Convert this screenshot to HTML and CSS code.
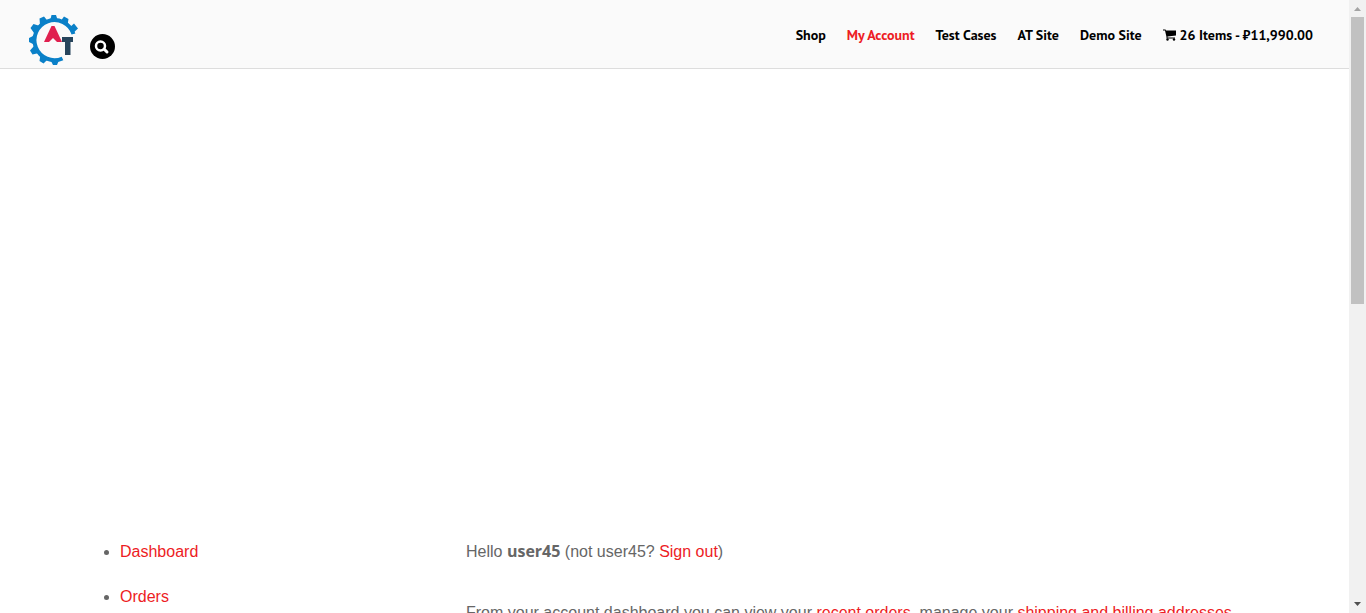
FILE: index.html
```html
<!DOCTYPE html>
<html lang="en">
<head>
<meta charset="utf-8">
<title>My Account</title>
<link rel="stylesheet" href="styles.css">
</head>
<body>
<div class="page">
  <header class="header">
    <div class="brand">
      <a class="logo" href="#" aria-label="AT Site home">
        <svg width="50" height="52" viewBox="0 0 50 52">
          <path d="M44.500 20A20 20 0 1 0 33.500 44.500" fill="none" stroke="#0a80c8" stroke-width="4"/>
          <path d="M21 7L22.500 1H27L29 7ZM11 11L10.500 4.500L15 2.500L19.500 8ZM5 19L1.500 14L4.500 10L11 12ZM6 31L0 28V24L6 21ZM10 39L3.500 40.500L1 36.500L5 32ZM19 45L14.500 49.500L10.500 47L11.500 40ZM30.500 45L28 51H24L21 45ZM31 8L35 2.500L39.500 5L38.500 11ZM40 14L45 9.500L49 14.500L43 20Z" fill="#0a80c8"/>
          <path d="M15 28L22.500 12H25.500L33 28H28L24 24L20 28Z" fill="#e0204f"/>
          <path d="M33 23H44V28H41.500V41H36V28H33Z" fill="#27455c"/>
        </svg>
      </a>
      <button class="search" aria-label="Search">
        <svg width="25" height="25" viewBox="0 0 25 25">
          <circle cx="10.500" cy="12" r="4.500" fill="none" stroke="#fff" stroke-width="2.500"/>
          <path d="M14 15L17 18" stroke="#fff" stroke-width="3" stroke-linecap="round"/>
        </svg>
      </button>
    </div>
    <nav class="nav">
      <a href="#">Shop</a>
      <a class="current" href="#">My Account</a>
      <a href="#">Test Cases</a>
      <a href="#">AT Site</a>
      <a href="#">Demo Site</a>
      <a class="cart" href="#"><svg width="13" height="12" viewBox="0 0 13 12"><path d="M0 .5H2.500L3 1.500H13V6.500L4.500 7.500V8.500H12V9.500H3.500V8L2 1.500H0Z"/><circle cx="4.500" cy="10.500" r="1.200"/><circle cx="11" cy="10.500" r="1.200"/></svg>26 Items - ₽11,990.00</a>
    </nav>
  </header>
  <main class="content">
    <ul class="menu">
      <li><a href="#">Dashboard</a></li>
      <li><a href="#">Orders</a></li>
    </ul>
    <section class="account">
      <p>Hello <strong>user45</strong> (not user45? <a href="#">Sign out</a>)</p>
      <p>From your account dashboard you can view your <a href="#">recent orders</a>, manage your <a href="#">shipping and billing addresses</a></p>
    </section>
  </main>
</div>
<div class="scrollbar" aria-hidden="true">
  <svg width="17" height="17" viewBox="0 0 17 17"><path d="M5 11L8.500 7L12 11Z" fill="#a3a3a3"/></svg>
  <div class="track"><div class="thumb"></div></div>
  <svg width="17" height="17" viewBox="0 0 17 17"><path d="M5 6L8.500 10L12 6Z" fill="#505050"/></svg>
</div>
</body>
</html>
```
FILE: styles.css
```css
* { box-sizing: border-box; }
body {
  margin: 0;
  height: 100vh;
  display: flex;
  overflow: hidden;
  background: #fff;
  color: #666;
  font: 16px/24px "Liberation Sans", Arial, sans-serif;
}
a { color: #ed1c24; text-decoration: none; }
svg { display: block; }
.page { flex: 1; min-width: 0; overflow: hidden; }
.header {
  display: flex;
  justify-content: space-between;
  padding: 14px 36px 2px 29px;
  background: #fafafa;
  border-bottom: 1px solid #ddd;
}
.brand { display: flex; gap: 11px; }
.search {
  width: 25px;
  height: 25px;
  margin: 20px 0 0;
  padding: 0;
  border: 0;
  border-radius: 50%;
  background: #000;
}
.nav {
  display: flex;
  align-items: flex-start;
  gap: 21px;
  padding-top: 9px;
  font: 700 14px/24px "PT Sans", Lato, "Noto Sans", sans-serif;
  white-space: nowrap;
}
.nav a { color: #000; }
.nav .current { color: #ed1c24; }
.nav .cart { display: flex; gap: 4px; align-items: center; }
.content {
  display: grid;
  grid-template-columns: 346px 1fr;
  padding: 471px 90px 0 120px;
}
.menu { margin: 0; padding: 0; }
.menu li { margin-bottom: 21px; }
.account { white-space: nowrap; }
.account p { margin: 0 0 37px; }
.account strong { font-family: "Open Sans", sans-serif; line-height: 20px; }
.scrollbar {
  display: flex;
  flex-direction: column;
  width: 17px;
  background: #f1f1f1;
}
.track { flex: 1; padding: 0 2px; }
.thumb { height: 49.5%; background: #c1c1c1; }
```
